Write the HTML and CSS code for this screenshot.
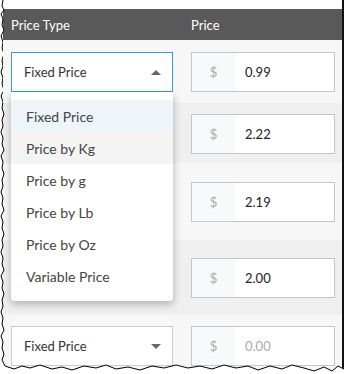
FILE: index.html
```html
<!DOCTYPE html>
<html lang="en">
    <head>
        <meta charset="UTF-8">
        <meta name="viewport" content="width=device-width, initial-scale=1.0">
        <title>Price Type</title>
        <link rel="stylesheet" href="styles.css">
    </head>
    <body>
        <div class="frame">
            <div class="sheet">
                <div class="head">
                    <div>Price Type</div>
                    <div>Price</div>
                </div>

                <div class="row row-a">
                    <div class="select open">
                        <span>Fixed Price</span>
                        <i class="caret up"></i>
                        <ul class="menu">
                            <li class="menu-item active">Fixed Price</li>
                            <li class="menu-item hover">Price by Kg</li>
                            <li class="menu-item">Price by g</li>
                            <li class="menu-item">Price by Lb</li>
                            <li class="menu-item">Price by Oz</li>
                            <li class="menu-item">Variable Price</li>
                        </ul>
                    </div>
                    <div class="price"><span class="cur">$</span><span class="val">0.99</span></div>
                </div>

                <div class="row row-b">
                    <div class="cell"></div>
                    <div class="price"><span class="cur">$</span><span class="val">2.22</span></div>
                </div>

                <div class="row row-c">
                    <div class="cell"></div>
                    <div class="price"><span class="cur">$</span><span class="val">2.19</span></div>
                </div>

                <div class="row row-d">
                    <div class="cell"></div>
                    <div class="price"><span class="cur">$</span><span class="val">2.00</span></div>
                </div>

                <div class="row row-e">
                    <div class="select">
                        <span>Fixed Price</span>
                        <i class="caret"></i>
                    </div>
                    <div class="price"><span class="cur">$</span><span class="val empty">0.00</span></div>
                </div>
            </div>

            <!-- torn edges of the screenshot -->
            <svg class="edge" width="346" height="374" viewBox="0 0 346 374">
                <path d="M0 0 L3 0 L2 6 L4 10 L1 14 L3 19 L2 25 L4 30 L1 36 L3 42 L2 48 L4 54 L2 60 L3 66 L1 72 L3 78 L2 84 L4 90 L1 96 L3 102 L2 108 L4 114 L2 120 L3 126 L1 132 L3 138 L2 144 L4 150 L1 156 L3 162 L2 168 L4 174 L2 180 L3 186 L1 192 L3 198 L2 204 L4 210 L1 216 L3 222 L2 228 L4 234 L2 240 L3 246 L1 252 L3 258 L2 264 L4 270 L1 276 L3 282 L2 288 L4 294 L2 300 L3 306 L1 312 L3 318 L2 324 L4 330 L1 336 L3 342 L2 348 L4 354 L2 360 L5 366 L0 374 Z" fill="#fff"/>
                <path d="M3 0 L2 6 L4 10 L1 14 L3 19 L2 25 L4 30 L1 36 L3 42 L2 48 L4 54 L2 60 L3 66 L1 72 L3 78 L2 84 L4 90 L1 96 L3 102 L2 108 L4 114 L2 120 L3 126 L1 132 L3 138 L2 144 L4 150 L1 156 L3 162 L2 168 L4 174 L2 180 L3 186 L1 192 L3 198 L2 204 L4 210 L1 216 L3 222 L2 228 L4 234 L2 240 L3 246 L1 252 L3 258 L2 264 L4 270 L1 276 L3 282 L2 288 L4 294 L2 300 L3 306 L1 312 L3 318 L2 324 L4 330 L1 336 L3 342 L2 348 L4 354 L2 360 L5 366" fill="none" stroke="#000" stroke-width="1"/>
                <path d="M5 366 L14 369 L22 366 L30 368 L40 365 L52 369 L62 367 L72 370 L84 366 L96 368 L106 365 L116 369 L128 367 L140 370 L152 366 L164 368 L176 365 L188 368 L200 366 L212 369 L224 365 L236 368 L248 366 L258 370 L270 366 L282 369 L292 365 L304 368 L314 371 L324 367 L332 371 L338 366 L344 369 L346 369 L346 374 L0 374 L0 366 Z" fill="#fff"/>
                <path d="M5 366 L14 369 L22 366 L30 368 L40 365 L52 369 L62 367 L72 370 L84 366 L96 368 L106 365 L116 369 L128 367 L140 370 L152 366 L164 368 L176 365 L188 368 L200 366 L212 369 L224 365 L236 368 L248 366 L258 370 L270 366 L282 369 L292 365 L304 368 L314 371 L324 367 L332 371 L338 366 L344 369" fill="none" stroke="#000" stroke-width="1"/>
            </svg>
        </div>
    </body>
</html>
```

FILE: styles.css
```css
*{
    box-sizing: border-box;
}

body{
    margin: 0;
    background-color: #fff;
    font-family: Lato, "Open Sans", sans-serif;
}

ul{
    padding: 0;
    margin: 0;
    list-style: none;
}

.frame{
    position: relative;
    width: 346px;
    height: 374px;
    overflow: hidden;
}

.sheet{
    width: 344px;
    height: 374px;
    padding-top: 9px;
    padding-left: 3px;
    border-right: 2px solid #111;
    background-color: #fff;
}

.head,
.row{
    display: grid;
    grid-template-columns: 162px 144px;
    column-gap: 18px;
    padding-left: 8px;
}

.head{
    height: 31px;
    align-items: center;
    background-color: #595959;
    color: #fff;
    font-size: 13px;
}

.row-a{ padding-top: 12px; padding-bottom: 11px; background-color: #f7f7f7; }
.row-b{ padding-top: 11px; padding-bottom: 9px; background-color: #efefef; }
.row-c{ padding-top: 19px; padding-bottom: 18px; background-color: #f7f7f7; }
.row-d{ padding-top: 18px; padding-bottom: 17px; background-color: #efefef; }
.row-e{ padding-top: 11px; padding-bottom: 20px; background-color: #f7f7f7; }

.row-a{
    position: relative;
    z-index: 2;
}

.select{
    position: relative;
    display: flex;
    align-items: center;
    height: 40px;
    padding-left: 12px;
    border: 1px solid #ccc;
    background-color: #fff;
    color: #333;
    font-size: 13px;
}

.select.open{
    border-color: #3d9ad5;
}

.caret{
    position: absolute;
    top: 17px;
    right: 11px;
    width: 0;
    height: 0;
    border-left: 5px solid transparent;
    border-right: 5px solid transparent;
    border-top: 5px solid #666;
}

.caret.up{
    border-top: 0;
    border-bottom: 5px solid #666;
}

.menu{
    position: absolute;
    top: 39px;
    left: -1px;
    width: 162px;
    padding: 8px 0 9px;
    background-color: #fff;
    border-radius: 0 0 4px 4px;
    box-shadow: 0 3px 8px rgba(0, 0, 0, .28);
}

.menu-item{
    height: 32px;
    line-height: 33px;
    padding-left: 15px;
    color: #444;
    font-size: 14px;
}

.menu-item.active{
    background-color: #eef5fa;
}

.menu-item.hover{
    background-color: #f4f4f4;
}

.price{
    display: flex;
    height: 40px;
    border: 1px solid #c6c6c6;
    background-color: #fff;
    font-size: 13px;
}

.price .cur{
    width: 43px;
    line-height: 38px;
    text-align: center;
    background-color: #f8f9fb;
    color: #aaa;
}

.price .val{
    padding-left: 10px;
    line-height: 38px;
    color: #222;
}

.price .val.empty{
    color: #aaa;
}

.edge{
    position: absolute;
    top: 0;
    left: 0;
}
```
